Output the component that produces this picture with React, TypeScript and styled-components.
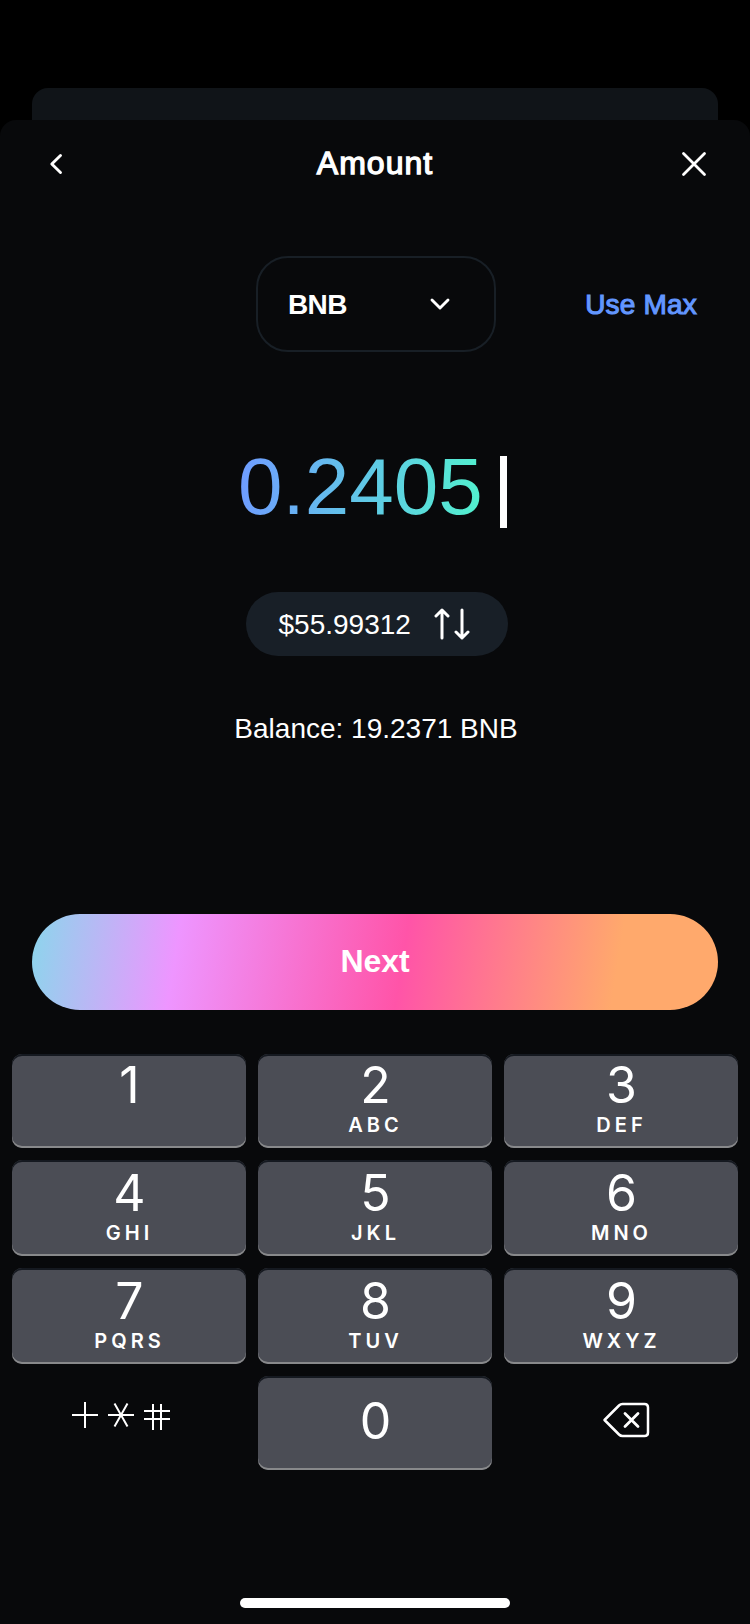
import React from "react";
import styled, { createGlobalStyle } from "styled-components";

const GlobalStyle = createGlobalStyle`
  *, *::before, *::after { box-sizing: border-box; }
  body { margin: 0; background: #000; }
  button { font: inherit; color: inherit; background: none; border: 0; padding: 0; margin: 0; }
  svg { display: block; }
`;

const Screen = styled.div`
  width: 750px;
  height: 1624px;
  padding-top: 88px;
  background: #000;
  color: #fff;
  font-family: "Liberation Sans", Arial, sans-serif;
  overflow: hidden;
`;

const BackCard = styled.div`
  height: 32px;
  margin: 0 32px;
  border-radius: 16px 16px 0 0;
  background: #101418;
`;

const Sheet = styled.main`
  height: 1504px;
  display: flex;
  flex-direction: column;
  border-radius: 16px 16px 0 0;
  background: #08090b;
`;

const Header = styled.header`
  height: 88px;
  padding: 0 32px;
  display: grid;
  grid-template-columns: 48px 1fr 48px;
  align-items: center;
`;

const IconButton = styled.button`
  width: 48px;
  height: 48px;
`;

const Title = styled.h1`
  margin: 0;
  padding-bottom: 2px;
  text-align: center;
  font-size: 32px;
  line-height: 40px;
  font-weight: 400;
  letter-spacing: 1px;
  -webkit-text-stroke: 1.3px #fff;
`;

const AssetRow = styled.section`
  margin-top: 48px;
  height: 96px;
  display: grid;
  grid-template-columns: 256px 240px 1fr;
  align-items: center;
`;

const AssetSelect = styled.button`
  grid-column: 2;
  height: 96px;
  padding: 2px 38px 0 30px;
  display: flex;
  align-items: center;
  justify-content: space-between;
  border: 2px solid #181f26;
  border-radius: 32px;
  font-size: 28px;
  line-height: 36px;
  font-weight: 700;
  letter-spacing: -0.6px;
`;

const UseMax = styled.button`
  justify-self: end;
  padding-top: 2px;
  margin-right: 53px;
  color: #6296ff;
  font-size: 28px;
  line-height: 36px;
  letter-spacing: 0.2px;
  -webkit-text-stroke: 1.1px #6296ff;
  white-space: nowrap;
`;

const AmountRow = styled.section`
  margin-top: 80px;
  height: 112px;
  padding-left: 238px;
  display: flex;
  align-items: center;
`;

const AmountValue = styled.span`
  padding-bottom: 2px;
  font-size: 80px;
  line-height: 110px;
  background: linear-gradient(95deg, #6f9dff 3%, #52f0cf 97%);
  -webkit-background-clip: text;
  background-clip: text;
  color: transparent;
`;

const Caret = styled.span`
  width: 7px;
  height: 72px;
  margin: 8px 0 0 17px;
  background: #fff;
`;

const FiatButton = styled.button`
  align-self: flex-start;
  width: 262px;
  height: 64px;
  margin: 48px 0 0 246px;
  padding: 0 38px 0 32.5px;
  display: flex;
  align-items: center;
  justify-content: space-between;
  border-radius: 32px;
  background: #181f27;
  font-size: 28px;
  line-height: 36px;
`;

const FiatValue = styled.span`
  padding-top: 2px;
`;

const Balance = styled.p`
  margin: 55px 0 0;
  padding-left: 2px;
  text-align: center;
  font-size: 28px;
  line-height: 36px;
`;

const NextButton = styled.button`
  margin: 167px 32px 0;
  height: 96px;
  flex: none;
  padding-bottom: 2px;
  border-radius: 48px;
  background: linear-gradient(99deg, #8bd6ec 0%, #ee95ff 21.4%, #ff54a8 53.9%, #ffa96c 84.7%);
  font-size: 32px;
  line-height: 40px;
  font-weight: 700;
  letter-spacing: -0.1px;
`;

const Keypad = styled.section`
  margin: 44px 12px 0;
  display: grid;
  grid-template-columns: repeat(3, 234px);
  grid-template-rows: 94px 96px 96px 94px;
  gap: 12px;
  font-family: Inter, sans-serif;
`;

const Key = styled.button<{ $offset: number }>`
  height: 100%;
  padding-top: ${(p) => p.$offset}px;
  display: flex;
  flex-direction: column;
  align-items: center;
  border-radius: 10px;
  background: #4b4d55;
  box-shadow: inset 0 2px 0 #151920, inset 0 -2px 0 #88898b;
`;

const Digit = styled.span`
  padding-left: 1px;
  font-size: 50px;
  line-height: 60px;
  font-weight: 400;
`;

const Letters = styled.span`
  font-size: 20px;
  line-height: 20px;
  font-weight: 600;
  letter-spacing: 4px;
  margin-right: -1px;
`;

const PlainKey = styled.button`
  height: 100%;
`;

const HomeIndicator = styled.div`
  width: 270px;
  height: 10px;
  margin: auto auto 16px;
  border-radius: 5px;
  background: #fff;
`;

type KeyDef = { digit: string; letters?: string };

const rows: { offset: number; keys: KeyDef[] }[] = [
  { offset: 1, keys: [{ digit: "1" }, { digit: "2", letters: "ABC" }, { digit: "3", letters: "DEF" }] },
  {
    offset: 3,
    keys: [
      { digit: "4", letters: "GHI" },
      { digit: "5", letters: "JKL" },
      { digit: "6", letters: "MNO" },
    ],
  },
  {
    offset: 3,
    keys: [
      { digit: "7", letters: "PQRS" },
      { digit: "8", letters: "TUV" },
      { digit: "9", letters: "WXYZ" },
    ],
  },
];

const stroke = {
  fill: "none",
  stroke: "#fff",
  strokeLinecap: "round" as const,
  strokeLinejoin: "round" as const,
};

const BackIcon = () => (
  <svg width="48" height="48" viewBox="0 0 48 48" {...stroke} strokeWidth="2.9">
    <path d="M28.5 15.5 19.800 24l8.700 8.500" />
  </svg>
);

const CloseIcon = () => (
  <svg width="48" height="48" viewBox="0 0 48 48" {...stroke} strokeWidth="2.8">
    <path d="M13.500 13.500 34.500 34.500M34.500 13.500 13.500 34.500" />
  </svg>
);

const ChevronDown = () => (
  <svg width="32" height="32" viewBox="0 0 32 32" {...stroke} strokeWidth="2.9">
    <path d="M8 11 16 19l8-8" />
  </svg>
);

const SwapIcon = () => (
  <svg width="36" height="34" viewBox="0 0 36 34" {...stroke} strokeWidth="3">
    <path d="M8 31V3M2 9 8 3l6 6M28 3v28M22 25 28 31l6-6" />
  </svg>
);

const SymbolsIcon = () => (
  <svg width="234" height="94" viewBox="0 0 234 94" fill="none" stroke="#fff" strokeWidth="2">
    <path d="M60 39h26M73 26v26" />
    <path d="M96 39h26M102.500 27.500l13 23M115.500 27.500l-13 23" />
    <path d="M132 35h26M132 43h26M141 28v26M149 28v26" />
  </svg>
);

const DeleteIcon = () => (
  <svg width="234" height="94" viewBox="0 0 234 94" {...stroke} strokeWidth="2.500">
    <path d="M100.500 44 115 29.500Q116.500 28 118.500 28H140.500Q144 28 144 31.500V56.500Q144 60 140.500 60H118.500Q116.500 60 115 58.500Z" />
    <path d="M121 37.500 134 50.500M134 37.500 121 50.500" strokeWidth="2.800" />
  </svg>
);

export default function App() {
  return (
    <>
      <GlobalStyle />
      <Screen>
        <BackCard />
        <Sheet>
          <Header>
            <IconButton aria-label="Back">
              <BackIcon />
            </IconButton>
            <Title>Amount</Title>
            <IconButton aria-label="Close">
              <CloseIcon />
            </IconButton>
          </Header>

          <AssetRow>
            <AssetSelect>
              BNB
              <ChevronDown />
            </AssetSelect>
            <UseMax>Use Max</UseMax>
          </AssetRow>

          <AmountRow>
            <AmountValue>0.2405</AmountValue>
            <Caret />
          </AmountRow>

          <FiatButton>
            <FiatValue>$55.99312</FiatValue>
            <SwapIcon />
          </FiatButton>
          <Balance>Balance: 19.2371 BNB</Balance>

          <NextButton>Next</NextButton>

          <Keypad>
            {rows.map((row) =>
              row.keys.map((key) => (
                <Key key={key.digit} $offset={row.offset}>
                  <Digit>{key.digit}</Digit>
                  {key.letters && <Letters>{key.letters}</Letters>}
                </Key>
              ))
            )}
            <PlainKey aria-label="Symbols">
              <SymbolsIcon />
            </PlainKey>
            <Key $offset={15}>
              <Digit>0</Digit>
            </Key>
            <PlainKey aria-label="Delete">
              <DeleteIcon />
            </PlainKey>
          </Keypad>

          <HomeIndicator />
        </Sheet>
      </Screen>
    </>
  );
}
